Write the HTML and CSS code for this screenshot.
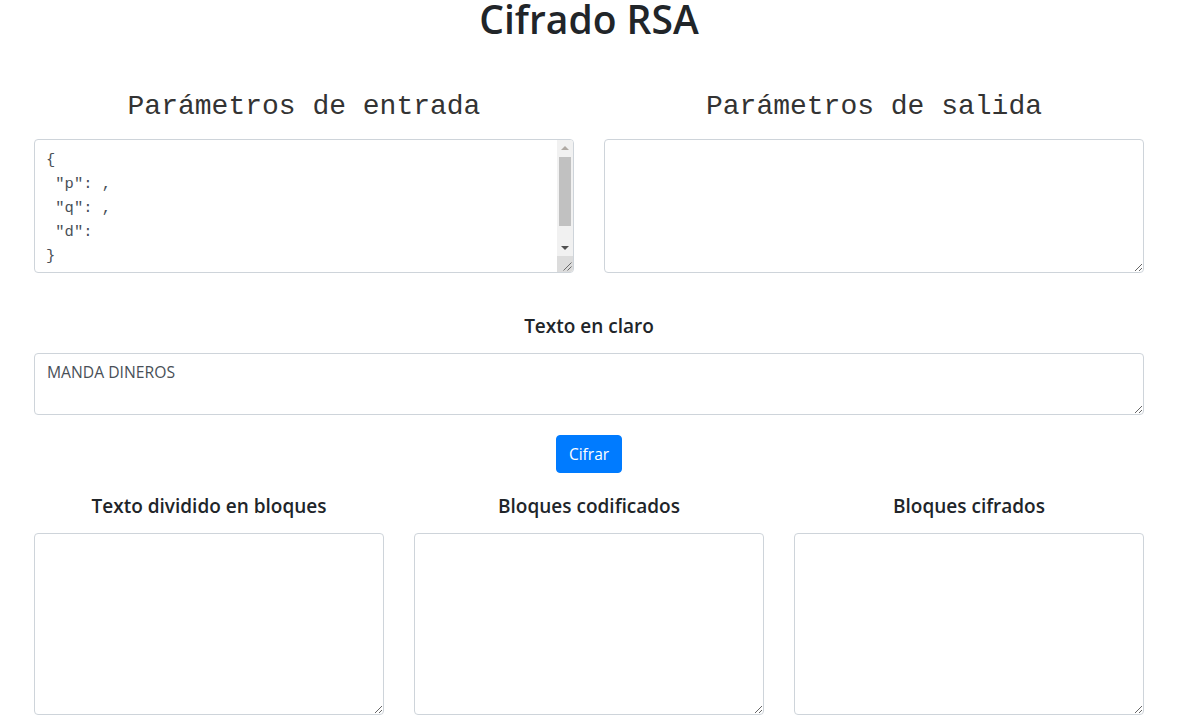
FILE: index.html
```html
<!DOCTYPE html>
<html lang="es">
<head>
<meta charset="utf-8">
<title>Cifrado RSA</title>
<link rel="stylesheet" href="styles.css">
</head>
<body>
<div class="container">
  <h1 class="title">Cifrado RSA</h1>
  <div class="row two">
    <div class="col">
      <h3 class="mono-title">Parámetros de entrada</h3>
      <div class="scroll-wrap">
        <textarea class="field mono" rows="5">{
 "p": ,
 "q": ,
 "d": 
}
</textarea>
        <div class="fake-scrollbar" aria-hidden="true">
          <div class="sb-btn"><span class="tri-up"></span></div>
          <div class="sb-track"><div class="sb-thumb"></div></div>
          <div class="sb-btn"><span class="tri-down"></span></div>
          <div class="sb-corner">
            <svg width="10" height="10" viewBox="0 0 10 10"><path d="M9.5 1.5 L1.5 9.5 M9.5 5.5 L5.5 9.5" stroke="#6b6b6b" stroke-width="1" fill="none"/></svg>
          </div>
        </div>
      </div>
    </div>
    <div class="col">
      <h3 class="mono-title">Parámetros de salida</h3>
      <textarea class="field" rows="5"></textarea>
    </div>
  </div>
  <div class="plain">
    <h5 class="label">Texto en claro</h5>
    <textarea class="field" rows="2">MANDA DINEROS</textarea>
  </div>
  <div class="actions">
    <button class="btn">Cifrar</button>
  </div>
  <div class="row three">
    <div class="col">
      <h5 class="label">Texto dividido en bloques</h5>
      <textarea class="field" rows="7"></textarea>
    </div>
    <div class="col">
      <h5 class="label">Bloques codificados</h5>
      <textarea class="field" rows="7"></textarea>
    </div>
    <div class="col">
      <h5 class="label">Bloques cifrados</h5>
      <textarea class="field" rows="7"></textarea>
    </div>
  </div>
</div>
</body>
</html>
```
FILE: styles.css
```css
* { box-sizing: border-box; }
html, body { margin: 0; padding: 0; background: #fff; }
body {
  font-family: "Open Sans", "Noto Sans", sans-serif;
  color: #212529;
  font-size: 16px;
  line-height: 1.5;
}
.container {
  padding: 0 35px 0 34px;
}
.title {
  margin: 0;
  text-align: center;
  font-size: 39px;
  font-weight: 600;
  line-height: 38px;
}
.row { display: grid; gap: 30px; }
.two { grid-template-columns: 1fr 1fr; margin-top: 52px; }
.three { grid-template-columns: 1fr 1fr 1fr; margin-top: 21px; }
.col { display: flex; flex-direction: column; }
.mono-title {
  margin: 0 0 15px;
  text-align: center;
  font-family: "Liberation Mono", "Courier New", monospace;
  font-weight: 400;
  font-size: 28px;
  line-height: 34px;
  color: #333;
}
.label {
  margin: 0 0 15px;
  text-align: center;
  font-size: 19px;
  font-weight: 600;
  line-height: 24px;
}
.plain { margin-top: 41px; }
.field {
  display: block;
  width: 100%;
  padding: 6px 12px;
  border: 1px solid #ced4da;
  border-radius: 4px;
  font-family: "Open Sans", "Noto Sans", sans-serif;
  font-size: 15.7px;
  line-height: 24px;
  color: #495057;
  background: #fff;
  resize: vertical;
  margin: 0;
}
.field.mono {
  font-family: "Liberation Mono", "Courier New", monospace;
  font-size: 15.5px;
  padding: 8px 28px 4px 11px;
  overflow: hidden;
}
.scroll-wrap { position: relative; }
.fake-scrollbar {
  position: absolute;
  top: 1px;
  right: 1px;
  bottom: 1px;
  width: 16px;
  display: flex;
  flex-direction: column;
  background: #f1f1f1;
  border-top-right-radius: 3px;
  border-bottom-right-radius: 3px;
  overflow: hidden;
}
.sb-btn {
  flex: 0 0 17px;
  display: flex;
  align-items: center;
  justify-content: center;
}
.sb-btn:first-child { flex-basis: 16px; }
.tri-up {
  width: 0; height: 0;
  border-left: 4px solid transparent;
  border-right: 4px solid transparent;
  border-bottom: 4px solid #b0aaa4;
}
.tri-down {
  width: 0; height: 0;
  border-left: 4px solid transparent;
  border-right: 4px solid transparent;
  border-top: 4px solid #505050;
}
.sb-track { flex: 1; padding: 1px 2px 0; }
.sb-thumb { height: 69px; background: #c1c1c1; }
.sb-corner {
  flex: 0 0 16px;
  background: #dcdcdc;
  display: flex;
  align-items: flex-end;
  justify-content: flex-end;
  padding: 0 1px 1px 0;
}
.sb-corner svg { display: block; }
.actions {
  display: flex;
  justify-content: center;
  margin-top: 20px;
}
.btn {
  font-family: "Open Sans", "Noto Sans", sans-serif;
  font-size: 15.5px;
  line-height: 24px;
  padding: 6px 12px;
  color: #fff;
  background: #007bff;
  border: 1px solid #007bff;
  border-radius: 4px;
}
```
